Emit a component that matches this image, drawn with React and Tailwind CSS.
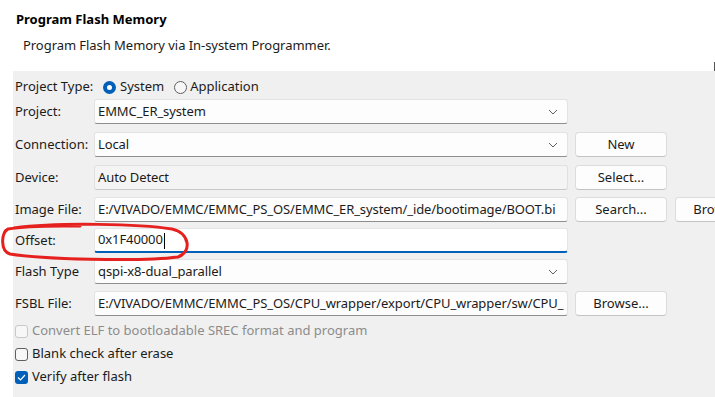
import React from "react";

const font = { fontFamily: '"Noto Sans", "Noto Sans CJK SC", sans-serif' };

const Chevron = () => (
  <svg width="10" height="6" viewBox="0 0 10 6" className="shrink-0">
    <path d="M1 1 L5 5 L9 1" fill="none" stroke="#606060" strokeWidth="1" />
  </svg>
);

const Field = ({ value, combo, disabled, focused, caret }) => (
  <div
    className={
      "w-[474px] h-[25px] shrink-0 flex items-center pl-[3px] rounded-[3px] border overflow-hidden " +
      (combo ? "pr-[9px] " : "pr-[1px] ") +
      (disabled
        ? "bg-[#f4f4f4] border-[#e0e0e0] border-b-[#c8c8c8]"
        : focused
        ? "bg-white border-[#e5e5e5] border-b-2 border-b-[#005fb8]"
        : "bg-[#fdfdfd] border-[#e3e3e3] border-b-[#8e8e8e]")
    }
  >
    <span className="flex-1 whitespace-nowrap overflow-hidden text-[13px] tracking-[-0.1px] text-[#1b1b1b]">
      {value}
      {caret && <span className="inline-block w-px h-[16px] bg-black align-middle ml-px" />}
    </span>
    {combo && <Chevron />}
  </div>
);

const Btn = ({ children, w = "w-[92px] ml-[7px]" }) => (
  <div
    className={
      w +
      " h-[25px] shrink-0 flex items-center justify-center rounded-[4px] bg-[#fdfdfd] border border-[#dcdcdc] border-b-[#c4c4c4] text-[13px] text-[#1b1b1b] whitespace-nowrap"
    }
  >
    {children}
  </div>
);

const Row = ({ label, mt, children }) => (
  <div className={"flex items-center " + mt}>
    <div className="w-[79px] shrink-0 text-[13px] text-[#1b1b1b] whitespace-nowrap">{label}</div>
    {children}
  </div>
);

const Check = ({ label, checked, disabled, mt }) => (
  <div className={"flex items-center h-[18px] " + mt}>
    {checked ? (
      <div className="w-[13px] h-[13px] rounded-[3px] bg-[#005fb8] flex items-center justify-center">
        <svg width="9" height="7" viewBox="0 0 9 7">
          <path d="M1 3.5 L3.5 6 L8 1" fill="none" stroke="white" strokeWidth="1.2" />
        </svg>
      </div>
    ) : (
      <div
        className={
          "w-[13px] h-[13px] rounded-[3px] border bg-[#f7f7f7] " +
          (disabled ? "border-[#c8c8c8]" : "border-[#5f5f5f]")
        }
      />
    )}
    <span className={"ml-[4px] text-[13px] whitespace-nowrap " + (disabled ? "text-[#8c8c8c]" : "text-[#1b1b1b]")}>
      {label}
    </span>
  </div>
);

export default function App() {
  return (
    <div className="w-[715px] h-[397px] overflow-hidden bg-white relative flex flex-col" style={font}>
      <div className="h-[71px] shrink-0 relative">
        <div className="pt-[10px] pl-[16px] text-[13px] font-bold leading-[18px] text-black">Program Flash Memory</div>
        <div className="pt-[8px] pl-[23px] text-[13px] tracking-[-0.05px] leading-[18px] text-[#1b1b1b]">
          Program Flash Memory via In-system Programmer.
        </div>
        <div className="absolute right-0 top-[62px] w-px h-[9px] bg-[#555]" />
      </div>

      <div className="flex-1 ml-[13px] bg-[#f0f0f0] pl-[2px] pt-[7px] overflow-hidden">
        <div className="flex items-center h-[18px] text-[13px] text-[#1b1b1b]">
          <span className="w-[88px] shrink-0">Project Type:</span>
          <div className="w-[13px] h-[13px] rounded-full bg-[#005fb8] flex items-center justify-center">
            <div className="w-[5px] h-[5px] rounded-full bg-white" />
          </div>
          <span className="ml-[4px]">System</span>
          <div className="ml-[10px] w-[13px] h-[13px] rounded-full border border-[#5f5f5f] bg-[#f7f7f7]" />
          <span className="ml-[3px]">Application</span>
        </div>

        <Row label="Project:" mt="mt-[3px]">
          <Field value="EMMC_ER_system" combo />
        </Row>
        <Row label="Connection:" mt="mt-[8px]">
          <Field value="Local" combo />
          <Btn>New</Btn>
        </Row>
        <Row label="Device:" mt="mt-[8px]">
          <Field value="Auto Detect" disabled />
          <Btn>Select...</Btn>
        </Row>
        <Row label="Image File:" mt="mt-[7px]">
          <Field value="E:/VIVADO/EMMC/EMMC_PS_OS/EMMC_ER_system/_ide/bootimage/BOOT.bi" />
          <Btn>Search...</Btn>
          <Btn w="w-[92px] ml-[8px]">Browse...</Btn>
        </Row>
        <Row label="Offset:" mt="mt-[6px]">
          <Field value="0x1F40000" focused caret />
        </Row>
        <Row label="Flash Type" mt="mt-[6px]">
          <Field value="qspi-x8-dual_parallel" combo />
        </Row>
        <Row label="FSBL File:" mt="mt-[7px]">
          <Field value="E:/VIVADO/EMMC/EMMC_PS_OS/CPU_wrapper/export/CPU_wrapper/sw/CPU_" />
          <Btn>Browse...</Btn>
        </Row>

        <Check label="Convert ELF to bootloadable SREC format and program" disabled mt="mt-[6px]" />
        <Check label="Blank check after erase" mt="mt-[5px]" />
        <Check label="Verify after flash" checked mt="mt-[5px]" />
      </div>

      <svg className="absolute left-0 top-0 pointer-events-none" width="715" height="397">
        <path
          d="M14 228 C 60 222, 140 224, 172 229 C 190 233, 192 252, 178 257 C 140 262, 40 259, 10 254 C 0 251, 1 232, 8 229 C 30 225, 60 226, 80 226"
          fill="none"
          stroke="#e5201e"
          strokeWidth="3"
          strokeLinecap="round"
        />
      </svg>
    </div>
  );
}
